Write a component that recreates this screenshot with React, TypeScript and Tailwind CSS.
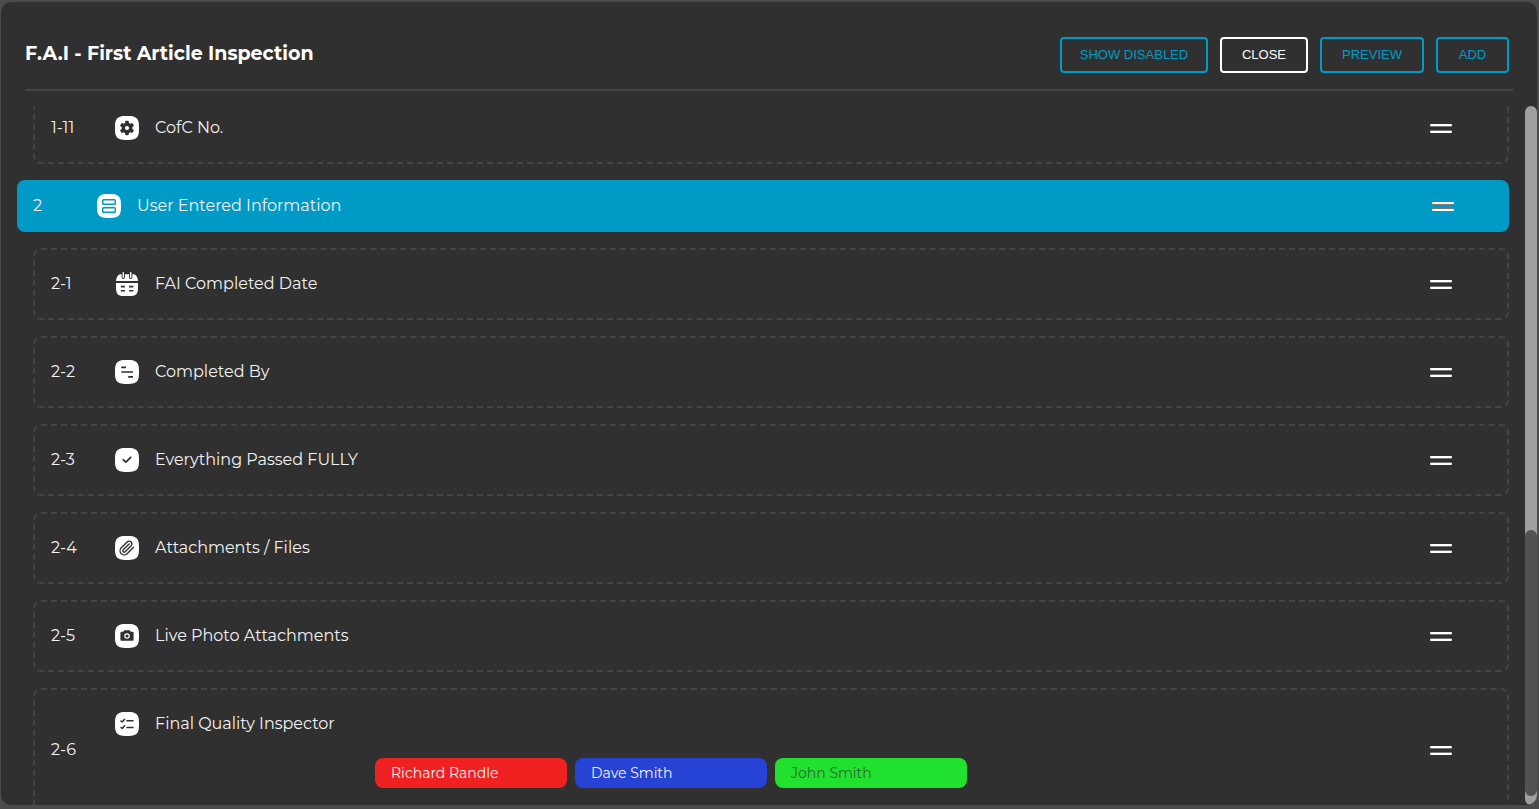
import React from "react";

type IconName = "gear" | "section" | "calendar" | "text" | "check" | "clip" | "camera" | "list";

const SQUIRCLE =
  "M12 0C14.9 0 17.6 0.1 19 0.7C21.2 1.5 22.5 2.8 23.3 5C23.9 6.6 24 9.1 24 12C24 14.9 23.9 17.4 23.3 19C22.5 21.2 21.2 22.5 19 23.3C17.4 23.9 14.9 24 12 24C9.1 24 6.6 23.9 5 23.3C2.8 22.5 1.5 21.2 0.7 19C0.1 17.4 0 14.9 0 12C0 9.1 0.1 6.6 0.7 5C1.5 2.8 2.8 1.5 5 0.7C6.6 0.1 9.1 0 12 0Z";

function Glyph({ name }: { name: IconName }) {
  switch (name) {
    case "gear":
      return (
        <g fill="#303030">
          <circle cx="12" cy="12" r="5.4" />
          {[0, 60, 120].map((a) => (
            <rect key={a} x="10.1" y="4.8" width="3.8" height="14.4" rx="1.1" transform={`rotate(${a} 12 12)`} />
          ))}
          <circle cx="12" cy="12" r="2.1" fill="#fff" />
        </g>
      );
    case "section":
      return (
        <g fill="none" stroke="#009ac7" strokeWidth="1.5">
          <rect x="5.75" y="5.75" width="12.5" height="4.6" rx="0.8" />
          <rect x="5.75" y="13.65" width="12.5" height="4.6" rx="0.8" />
        </g>
      );
    case "text":
      return (
        <path d="M6.3 7.3H11M6.3 12H18M13.2 16.8H18" stroke="#303030" strokeWidth="1.7" />
      );
    case "check":
      return (
        <path d="M8.3 11.8L10.8 14.1L15.7 9.3" fill="none" stroke="#303030" strokeWidth="1.8" strokeLinecap="round" strokeLinejoin="round" />
      );
    case "clip":
      return (
        <path
          transform="translate(3.7 3.7) scale(0.69)"
          d="m21.44 11.05-9.19 9.19a6 6 0 0 1-8.49-8.49l8.57-8.57A4 4 0 1 1 18 8.84l-8.59 8.57a2 2 0 0 1-2.83-2.83l8.49-8.48"
          fill="none"
          stroke="#303030"
          strokeWidth="2"
          strokeLinecap="round"
          strokeLinejoin="round"
        />
      );
    case "camera":
      return (
        <g>
          <path d="M9.2 6.2H14.8L15.7 7.7H17.5Q18.6 7.7 18.6 8.8V15.7Q18.6 16.8 17.5 16.8H6.5Q5.4 16.8 5.4 15.7V8.8Q5.4 7.7 6.5 7.7H8.3Z" fill="#303030" />
          <circle cx="12" cy="12" r="2.2" fill="none" stroke="#fff" strokeWidth="1.2" />
        </g>
      );
    default:
      return (
        <path
          d="M6 9L7.2 10L9.6 7.3M6 15.5L7.2 16.5L9.6 13.8M12 8.8H18M12 15.5H18"
          fill="none"
          stroke="#303030"
          strokeWidth="1.5"
          strokeLinecap="round"
          strokeLinejoin="round"
        />
      );
  }
}

function Icon({ name }: { name: IconName }) {
  if (name === "calendar") {
    return (
      <svg viewBox="0 0 24 24" className="size-6 shrink-0">
        <path d="M5.2 2.3H18.8Q22.6 3.5 23 9H1Q1.4 3.5 5.2 2.3Z" fill="#fff" />
        <path d="M1 11H23V15.5C23 22 21 24 15.5 24H8.5C3 24 1 22 1 15.5Z" fill="#fff" />
        <path d="M8.3 1V5.2M15.7 1V5.2" stroke="#303030" strokeWidth="3.4" strokeLinecap="round" />
        <path d="M8.3 0.8V5.2M15.7 0.8V5.2" stroke="#fff" strokeWidth="1.5" strokeLinecap="round" />
        <path d="M5.8 14.6H10M14 14.6H18.4M5.8 18.8H10M14 18.8H18.4" stroke="#303030" strokeWidth="1.6" />
      </svg>
    );
  }
  return (
    <svg viewBox="0 0 24 24" className="size-6 shrink-0">
      <path d={SQUIRCLE} fill="#fff" />
      <Glyph name={name} />
    </svg>
  );
}

function Handle() {
  return (
    <div className="flex h-[9px] w-[22px] shrink-0 flex-col justify-between">
      <div className="h-0.5 rounded-full bg-white shadow-[0_1px_0_#777]" />
      <div className="h-0.5 rounded-full bg-white shadow-[0_-1px_0_#777]" />
    </div>
  );
}

interface Item {
  no: string;
  noTracking: string;
  icon: IconName;
  label: string;
  tracking: string;
}

function Row({ item }: { item: Item }) {
  return (
    <div className="ml-4 flex h-[72px] shrink-0 items-center rounded-lg border-2 border-dashed border-[#444] pr-[55px] pl-4">
      <span className={`w-16 shrink-0 ${item.noTracking}`}>{item.no}</span>
      <Icon name={item.icon} />
      <span className={`ml-4 flex-1 ${item.tracking}`}>{item.label}</span>
      <Handle />
    </div>
  );
}

const BUTTON = "flex h-9 items-center justify-center rounded border-2 text-[13px]";

const items: Item[] = [
  { no: "2-1", noTracking: "", icon: "calendar", label: "FAI Completed Date", tracking: "" },
  { no: "2-2", noTracking: "", icon: "text", label: "Completed By", tracking: "" },
  { no: "2-3", noTracking: "", icon: "check", label: "Everything Passed FULLY", tracking: "" },
  { no: "2-4", noTracking: "", icon: "clip", label: "Attachments / Files", tracking: "" },
  { no: "2-5", noTracking: "", icon: "camera", label: "Live Photo Attachments", tracking: "" },
];

export default function App() {
  return (
    <div className="h-[809px] w-[1539px] overflow-hidden bg-[#4b4b4b] pt-0.5 pr-0.5 pb-1 pl-px font-['Montserrat','Inter',sans-serif] text-base text-[#f2f2f2]">
      <div className="flex h-[803px] flex-col overflow-hidden rounded-[10px] bg-[#303030]">
        <header className="mr-6 ml-6 flex h-[89px] shrink-0 items-center justify-between border-b-2 border-[#444] pt-[18px] pr-1">
          <h1 className="text-[19px] font-bold text-white">F.A.I - First Article Inspection</h1>
          <div className="flex gap-3 font-['Liberation_Sans',Arial,sans-serif] text-[#009ac7]">
            <button className={`${BUTTON} w-[148px] border-[#009ac7]`}>SHOW DISABLED</button>
            <button className={`${BUTTON} w-[88px] border-white text-white`}>CLOSE</button>
            <button className={`${BUTTON} w-[104px] border-[#009ac7]`}>PREVIEW</button>
            <button className={`${BUTTON} w-[73px] border-[#009ac7]`}>ADD</button>
          </div>
        </header>
        <div className="mt-[15px] flex min-h-0 flex-1 overflow-hidden">
          <div className="-mt-[14px] ml-4 flex w-[1492px] flex-col gap-4">
            <Row item={{ no: "1-11", noTracking: "", icon: "gear", label: "CofC No.", tracking: "" }} />
            <div className="flex h-[52px] shrink-0 items-center rounded-lg bg-[#009ac7] pr-[55px] pl-4">
              <span className="w-16 shrink-0">2</span>
              <Icon name="section" />
              <span className="ml-4 flex-1">User Entered Information</span>
              <Handle />
            </div>
            {items.map((item) => (
              <Row key={item.no} item={item} />
            ))}
            <div className="ml-4 flex h-[124px] shrink-0 items-center rounded-lg border-2 border-dashed border-[#444] pr-[55px] pl-4">
              <span className="w-16 shrink-0">2-6</span>
              <div className="flex-1">
                <div className="flex items-center">
                  <Icon name="list" />
                  <span className="ml-4">Final Quality Inspector</span>
                </div>
                <div className="mt-[22px] ml-[260px] flex gap-2 text-sm">
                  <div className="flex h-[30px] w-48 items-center rounded-lg bg-[#f02121] pl-4">Richard Randle</div>
                  <div className="flex h-[30px] w-48 items-center rounded-lg bg-[#2643d6] pl-4">Dave Smith</div>
                  <div className="flex h-[30px] w-48 items-center rounded-lg bg-[#20e22e] pl-4 text-[#2d6a31]">John Smith</div>
                </div>
              </div>
              <Handle />
            </div>
          </div>
          <div className="ml-4 flex w-3 flex-col rounded-full bg-[#9f9f9f] pt-[424px] pb-[9px]">
            <div className="flex-1 rounded-full bg-[#525252]" />
          </div>
        </div>
      </div>
    </div>
  );
}
